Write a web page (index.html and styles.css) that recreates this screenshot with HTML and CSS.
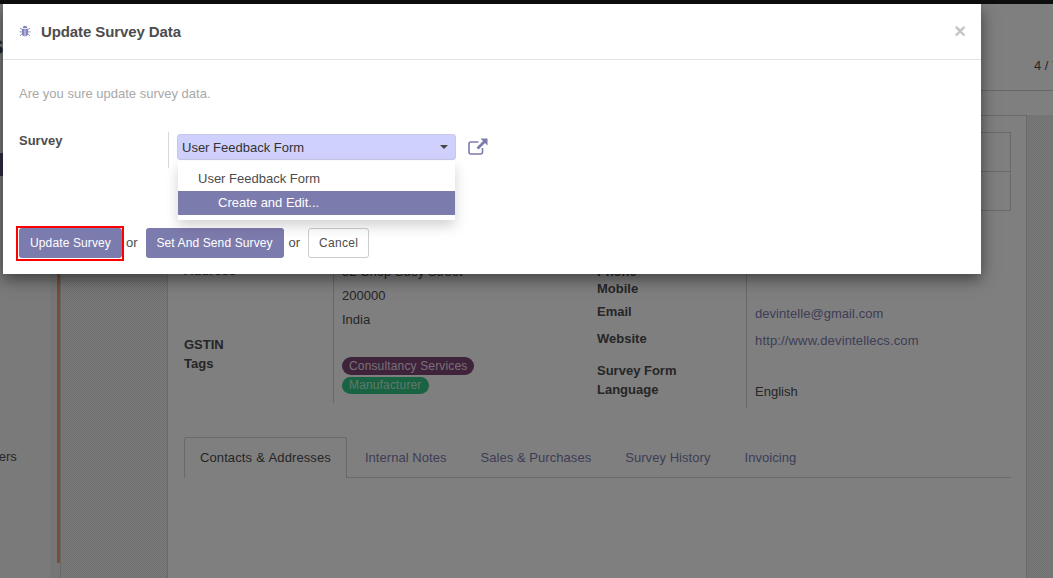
FILE: index.html
```html
<!DOCTYPE html>
<html lang="en">
<head>
  <meta charset="UTF-8" />
  <title>Update Survey Data</title>
  <link rel="stylesheet" href="styles.css">
</head>
<body>
  <div class="topbar"></div>

  <div class="app">
    <aside class="sidebar">
      <div class="sidebar-title">S</div>
      <div class="menu-active"></div>
      <div class="menu-item">Customers</div>
    </aside>
    <div class="accent"><div class="accent-bar"></div></div>

    <main class="content">
      <div class="control-panel">
        <div class="pager">4 / 7</div>
      </div>

      <div class="sheet-area">
        <div class="checker checker-left"></div>
        <div class="sheet">
          <div class="stat-box">
            <div class="stat-row"></div>
            <div class="stat-row"></div>
          </div>

          <div class="partner-form">
            <div class="col col-left">
              <div class="label label-address">Address</div>
              <div class="label label-gstin">GSTIN</div>
              <div class="label label-tags">Tags</div>
            </div>
            <div class="col col-mid">
              <div class="value value-street">32 Chop Suey Street</div>
              <div class="value value-zip">200000</div>
              <div class="value value-country">India</div>
              <div class="tags">
                <span class="tag tag-plum">Consultancy Services</span>
                <span class="tag tag-green">Manufacturer</span>
              </div>
            </div>
            <div class="col col-right">
              <div class="label label-phone">Phone</div>
              <div class="label label-mobile">Mobile</div>
              <div class="label label-email">Email</div>
              <div class="label label-website">Website</div>
              <div class="label label-surveyform">Survey Form</div>
              <div class="label label-language">Language</div>
            </div>
            <div class="col col-far">
              <a class="value link value-email">devintelle@gmail.com</a>
              <a class="value link value-web">http://www.devintellecs.com</a>
              <div class="value value-lang">English</div>
            </div>
          </div>

          <div class="tabs">
            <div class="tab tab-active">Contacts &amp; Addresses</div>
            <div class="tab">Internal Notes</div>
            <div class="tab">Sales &amp; Purchases</div>
            <div class="tab">Survey History</div>
            <div class="tab">Invoicing</div>
          </div>
        </div>
        <div class="checker checker-right"></div>
      </div>
    </main>
  </div>

  <div class="backdrop"></div>

  <div class="modal">
    <header class="modal-header">
      <svg class="bug-icon" viewBox="0 0 14 14" width="12" height="12">
        <path d="M4.4 3.6a2.6 2.6 0 0 1 5.2 0z" fill="#8584bd"/>
        <path d="M3.4 4.4h7.2v5.2a3.6 3.6 0 0 1-7.2 0z" fill="#8584bd"/>
        <path d="M7 5v8" stroke="#fff" stroke-width=".8"/>
        <path d="M3.4 5.2 1.2 3.6M3.2 8H.6M3.6 10.4 1.2 12.6M10.6 5.2l2.2-1.6M10.8 8h2.6M10.4 10.4l2.4 2.2" stroke="#8584bd" stroke-width="1.1" fill="none"/>
      </svg>
      <h4 class="modal-title">Update Survey Data</h4>
      <span class="modal-close">×</span>
    </header>

    <div class="modal-body">
      <p class="modal-note">Are you sure update survey data.</p>
      <div class="survey-field">
        <label class="survey-label">Survey</label>
        <div class="survey-value">
          <div class="combo">
            <span>User Feedback Form</span>
            <span class="caret"></span>
          </div>
          <svg class="external-icon" viewBox="0 0 20 17" width="20" height="17">
            <path d="M14.500 10v4a2 2 0 0 1-2 2H3a2 2 0 0 1-2-2V6a2 2 0 0 1 2-2h7.500" fill="none" stroke="#7c7bad" stroke-width="1.600"/>
            <path d="M12.500 .5h7v7l-2.500-2.500-6.500 6.500-2-2 6.500-6.500z" fill="#7c7bad"/>
          </svg>
          <ul class="dropdown">
            <li class="dropdown-item">User Feedback Form</li>
            <li class="dropdown-item dropdown-create">Create and Edit...</li>
          </ul>
        </div>
      </div>
    </div>

    <footer class="modal-footer">
      <span class="highlight"><button class="btn btn-primary btn-update">Update Survey</button></span>
      <span class="or or-first">or</span>
      <button class="btn btn-primary btn-send">Set And Send Survey</button>
      <span class="or">or</span>
      <button class="btn btn-default btn-cancel">Cancel</button>
    </footer>
  </div>
</body>
</html>
```

FILE: styles.css
```css
* {
  box-sizing: border-box;
}

html,
body {
  margin: 0;
  height: 578px;
  overflow: hidden;
}

body {
  position: relative;
  font-family: "Liberation Sans", Arial, sans-serif;
  font-size: 13px;
  color: #4c4c4c;
  background: #fff;
}

.topbar {
  height: 4px;
  background: #1c1c1c;
}

.app {
  display: flex;
  height: 574px;
}

/* Left menu, mostly hidden behind the dialog */
.sidebar {
  width: 50px;
  flex: none;
  background: #f4f4f4;
  padding-top: 31px;
  overflow: hidden;
}

.sidebar-title {
  margin-left: -10px;
  font-size: 20px;
  font-weight: bold;
  line-height: 24px;
}

.menu-active {
  width: 3px;
  height: 23px;
  margin-top: 94px;
  background: #5e5a8a;
}

.menu-item {
  margin-top: 272px;
  margin-left: -46px;
  white-space: nowrap;
  line-height: 18px;
}

.accent {
  width: 11px;
  flex: none;
  background: #ececec;
  border-right: 1px solid #d0d0d0;
  padding-left: 7px;
}

.accent-bar {
  width: 3px;
  height: 559px;
  background: #f59a6e;
}

.content {
  flex: 1;
  display: flex;
  flex-direction: column;
  min-width: 0;
}

.control-panel {
  height: 87px;
  flex: none;
  padding: 53px 0 0 973px;
  background: #fff;
  border-bottom: 1px solid #d0d0d0;
}

.pager {
  white-space: nowrap;
  line-height: 18px;
}

.sheet-area {
  flex: 1;
  display: flex;
  padding-top: 24px;
  background: #fff;
  min-height: 0;
}

.checker {
  flex: none;
  background-image: repeating-conic-gradient(#f4f4f4 0 25%, #e0e0e0 0 50%);
  background-size: 2px 2px;
}

.checker-left {
  width: 106px;
}

.checker-right {
  width: 26px;
}

.sheet {
  flex: 1;
  background: #fff;
  border: 1px solid #d4d4d4;
  border-bottom: none;
  padding: 16px 15px 0 16px;
  min-width: 0;
}

.stat-box {
  margin-left: auto;
  width: 400px;
  border: 1px solid #d4d4d4;
}

.stat-row {
  height: 38px;
}

.stat-row + .stat-row {
  height: 39px;
  border-top: 1px solid #d4d4d4;
}

/* Partner form: four columns, rows do not line up across them */
.partner-form {
  display: flex;
  align-items: flex-start;
  height: 216px;
  margin-top: 10px;
}

.col {
  flex: none;
  display: flex;
  flex-direction: column;
}

.col-left {
  width: 149px;
}

.col-mid {
  width: 264px;
  height: 182px;
  padding-left: 8px;
  border-left: 1px solid #d0d0d0;
}

.col-right {
  width: 149px;
}

.col-far {
  flex: 1;
  height: 187px;
  padding-left: 8px;
  border-left: 1px solid #d0d0d0;
}

.label {
  font-weight: bold;
  line-height: 18px;
}

.label-address { margin-top: 41px; }
.label-gstin { margin-top: 56px; }
.label-tags { margin-top: 1px; }

.label-phone { margin-top: 42px; }
.label-mobile { margin-top: -1px; }
.label-email { margin-top: 5px; }
.label-website { margin-top: 9px; }
.label-surveyform { margin-top: 14px; }
.label-language { margin-top: 1px; }

.value {
  display: block;
  line-height: 18px;
}

.value-street { margin-top: 42px; }
.value-zip { margin-top: 6px; }
.value-country { margin-top: 6px; }

.value-email { margin-top: 84px; letter-spacing: 0.05px; }
.value-web { margin-top: 9px; letter-spacing: 0.15px; }
.value-lang { margin-top: 33px; }

.link {
  color: #7c7bad;
}

.tags {
  display: flex;
  flex-direction: column;
  align-items: flex-start;
  gap: 2px;
  margin-top: 28px;
}

.tag {
  height: 18px;
  padding: 0 7px;
  border-radius: 9px;
  font-size: 12px;
  letter-spacing: 0.15px;
  line-height: 18px;
}

.tag-plum {
  background: #7e4677;
  color: #eedfea;
}

.tag-green {
  height: 17px;
  line-height: 17px;
  background: #32c485;
  color: #c0f0d8;
}

.tabs {
  display: flex;
  height: 41px;
  border-bottom: 1px solid #d4d4d4;
}

.tab {
  padding: 0 17px;
  line-height: 42px;
  letter-spacing: 0.05px;
  color: #7c7bad;
  white-space: nowrap;
}

.tab-active {
  height: 41px;
  margin-right: 1px;
  padding: 0 15px;
  line-height: 40px;
  letter-spacing: 0.1px;
  word-spacing: 0.5px;
  color: #4c4c4c;
  background: #fff;
  border: 1px solid #d4d4d4;
  border-bottom: none;
  border-radius: 3px 3px 0 0;
}

.backdrop {
  position: absolute;
  inset: 0;
  background: rgba(0, 0, 0, 0.5);
}

/* Dialog */
.modal {
  position: absolute;
  left: 3px;
  top: 4px;
  width: 978px;
  height: 270px;
  display: flex;
  flex-direction: column;
  background: #fff;
  box-shadow: 0 5px 15px rgba(0, 0, 0, 0.5);
}

.modal-header {
  display: flex;
  align-items: center;
  height: 56px;
  flex: none;
  padding: 0 15px 1px 16px;
  border-bottom: 1px solid #e5e5e5;
}

.bug-icon {
  margin-right: 10px;
}

.modal-title {
  margin: 0;
  font-size: 15px;
  letter-spacing: -0.1px;
  font-weight: bold;
  color: #4c4c4c;
}

.modal-close {
  margin-left: auto;
  margin-bottom: 1px;
  font-size: 20px;
  font-weight: bold;
  line-height: 20px;
  color: #c4c4c4;
}

.modal-body {
  padding: 25px 16px 0;
}

.modal-note {
  margin: 0;
  line-height: 18px;
  color: #a8a8a8;
}

.survey-field {
  display: flex;
  margin-top: 29px;
}

.survey-label {
  width: 149px;
  flex: none;
  font-weight: bold;
  line-height: 18px;
}

.survey-value {
  position: relative;
  display: flex;
  align-items: flex-start;
  height: 36px;
  padding: 2px 0 0 8px;
  border-left: 1px solid #d8d8d8;
}

.combo {
  display: flex;
  align-items: center;
  justify-content: space-between;
  width: 279px;
  height: 26px;
  padding: 0 4px;
  background: #d0d0fc;
  border: 1px solid #c8c8ea;
  border-radius: 3px;
  color: #333;
}

.caret {
  width: 0;
  height: 0;
  margin-right: 3px;
  border-top: 4px solid #444;
  border-left: 4px solid transparent;
  border-right: 4px solid transparent;
}

.external-icon {
  margin: 4px 0 0 12px;
}

.dropdown {
  position: absolute;
  left: 9px;
  top: 29px;
  width: 277px;
  height: 59px;
  margin: 0;
  padding: 6px 0 5px;
  list-style: none;
  background: #fff;
  box-shadow: 0 6px 12px rgba(0, 0, 0, 0.175);
}

.dropdown-item {
  height: 24px;
  padding-left: 20px;
  line-height: 24px;
}

.dropdown-create {
  padding-left: 40px;
  background: #7c7bad;
  color: #fff;
}

.modal-footer {
  display: flex;
  align-items: flex-start;
  margin-top: auto;
  padding: 0 0 13px 13px;
}

.highlight {
  display: block;
  padding: 0 0 1px 1px;
  border: 2px solid #f00;
}

.btn {
  display: block;
  height: 30px;
  padding: 0;
  font-family: inherit;
  font-size: 12px;
  letter-spacing: 0.12px;
  border-radius: 3px;
  cursor: pointer;
}

.btn-update { width: 103px; }
.btn-send { width: 138px; margin-top: 2px; }
.btn-cancel { width: 61px; margin-top: 2px; letter-spacing: 0.3px; }

.btn-primary {
  background: #7c7bad;
  border: none;
  color: #fff;
}

.btn-default {
  background: #fff;
  border: 1px solid #ccc;
  color: #4c4c4c;
}

.or {
  margin: 2px 8px 0 5px;
  line-height: 30px;
}

.or-first {
  margin-left: 2px;
}
```
